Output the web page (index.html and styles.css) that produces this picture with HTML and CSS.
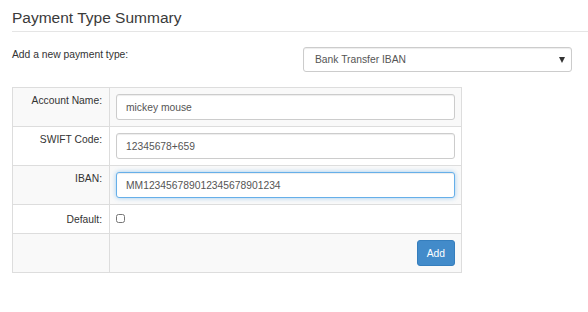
FILE: index.html
```html
<!DOCTYPE html>
<html lang="en">
<head>
  <meta charset="UTF-8" />
  <title>Payment Type Summary</title>
  <link rel="stylesheet" href="styles.css">
</head>
<body>
  <div class="page">
    <h3 class="page-title">Payment Type Summary</h3>

    <div class="type-row">
      <label class="type-label">Add a new payment type:</label>
      <div class="select-wrap">
        <select class="type-select">
          <option>Bank Transfer IBAN</option>
          <option>Credit Card</option>
          <option>Cheque</option>
        </select>
      </div>
    </div>

    <table class="pay-table">
      <tr>
        <th>Account Name:</th>
        <td><input class="field" type="text" value="mickey mouse"></td>
      </tr>
      <tr>
        <th>SWIFT Code:</th>
        <td><input class="field" type="text" value="12345678+659"></td>
      </tr>
      <tr>
        <th>IBAN:</th>
        <td><input class="field field-focus" type="text" value="MM123456789012345678901234"></td>
      </tr>
      <tr class="short-row">
        <th>Default:</th>
        <td><input class="check" type="checkbox"></td>
      </tr>
      <tr>
        <th></th>
        <td class="actions"><button class="btn-add">Add</button></td>
      </tr>
    </table>
  </div>
</body>
</html>
```

FILE: styles.css
```css
body {
  margin: 0;
  font-family: "Liberation Sans", Arial, sans-serif;
  font-size: 10.3px;
  color: #333;
  background: #fff;
}

.page {
  padding-left: 12px;
}

.page-title {
  margin: 0;
  padding-top: 9px;
  padding-bottom: 4px;
  font-size: 15.5px;
  font-weight: normal;
  line-height: 18px;
  color: #3a3a3a;
  border-bottom: 1px solid #e5e5e5;
}

.type-row {
  display: flex;
  align-items: flex-start;
  margin-top: 15px;
  padding-right: 16px;
}

.type-label {
  flex: 1;
  padding-top: 2px;
}

.select-wrap {
  position: relative;
  width: 269px;
}

.type-select {
  width: 100%;
  height: 25px;
  padding: 0 11px;
  font-family: inherit;
  font-size: 10.3px;
  color: #555;
  background: #fff;
  border: 1px solid #ccc;
  border-radius: 3px;
  -webkit-appearance: none;
  appearance: none;
  box-shadow: inset 0 1px 1px rgba(0,0,0,0.075);
}

.select-wrap::after {
  content: "";
  position: absolute;
  right: 7px;
  top: 10px;
  border-left: 3.5px solid transparent;
  border-right: 3.5px solid transparent;
  border-top: 6px solid #333;
  pointer-events: none;
}

.pay-table {
  margin-top: 15px;
  width: 450px;
  border-collapse: collapse;
}

.pay-table th,
.pay-table td {
  border: 1px solid #ddd;
  padding: 6px;
  vertical-align: top;
}

.pay-table tr:nth-child(odd) {
  background: #f9f9f9;
}

.pay-table th {
  width: 83px;
  text-align: right;
  font-weight: normal;
  padding-right: 7px;
  padding-top: 7px;
  line-height: 12px;
}

.pay-table .short-row td {
  height: 16px;
}

.pay-table .short-row th {
  padding-top: 9px;
}

.field {
  display: block;
  box-sizing: border-box;
  width: 100%;
  height: 26px;
  margin: 0;
  padding: 0 9px;
  font-family: inherit;
  font-size: 10.3px;
  color: #555;
  background: #fff;
  border: 1px solid #ccc;
  border-radius: 3px;
  box-shadow: inset 0 1px 1px rgba(0,0,0,0.075);
  outline: none;
}

.field-focus {
  border-color: #66afe9;
  box-shadow: inset 0 1px 1px rgba(0,0,0,0.075), 0 0 5px rgba(102,175,233,0.6);
}

.check {
  display: block;
  margin: 3px 0 0 0;
  width: 9px;
  height: 9px;
}

.actions {
  text-align: right;
}

.btn-add {
  display: inline-block;
  vertical-align: top;
  height: 26px;
  margin: 0;
  padding: 0 9px;
  font-family: inherit;
  font-size: 10.3px;
  color: #fff;
  background: #428bca;
  border: 1px solid #357ebd;
  border-radius: 3px;
}
```
